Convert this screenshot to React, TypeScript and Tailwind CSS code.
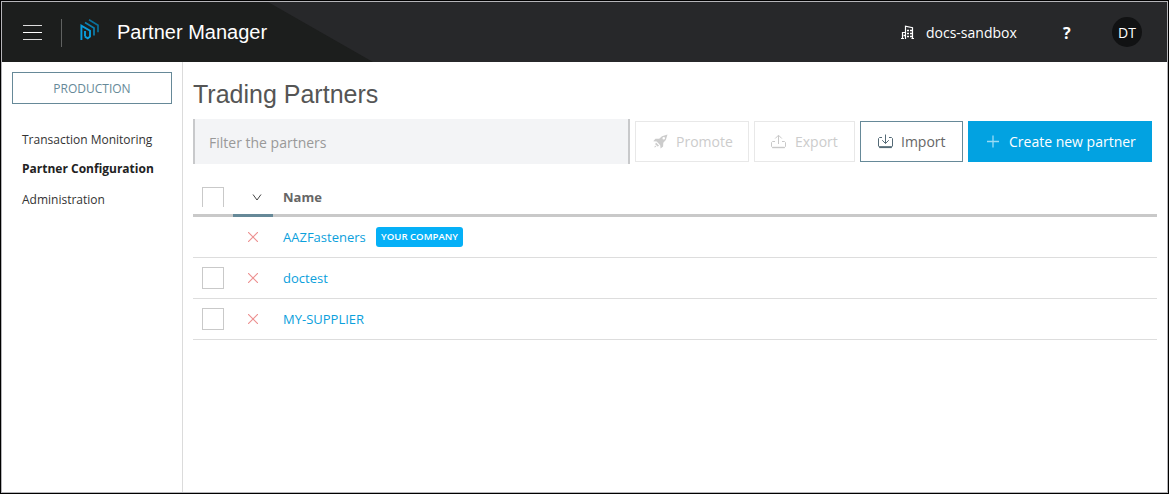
import type { ReactNode } from "react";

const partners = [
  { name: "AAZFasteners", own: true, width: "w-[83px]" },
  { name: "doctest", own: false, width: "w-[45px]" },
  { name: "MY-SUPPLIER", own: false, width: "w-[81px]" },
];

function Logo() {
  return (
    <svg width="20" height="22" viewBox="0 0 20 22" fill="none">
      <path d="M1.4 21V6.6L10 11.8V17.6L7.8 19.4L5 17.6M5 17.6V12" stroke="#0a9ddc" strokeWidth="1.9" />
      <path d="M5 3.6L14 9V16.4" stroke="#0b80b0" strokeWidth="1.7" />
      <path d="M9 0.8L18 6.2V13.2" stroke="#0a6f98" strokeWidth="1.7" />
    </svg>
  );
}

function Building() {
  return (
    <svg width="13" height="15" viewBox="0 0 13 15" fill="none" stroke="#fff">
      <path d="M4.5 14V1.2L11.5 2.7V14" strokeWidth="1.2" />
      <path d="M4.5 7.5H1.5V13.5M0 13.5H3M10.5 13.5H13" strokeWidth="1.2" />
      <path d="M6 5.5H8M9 5.5H11M6 8.5H8M9 8.5H11M6 11.5H8M9 11.5H11M2.5 10.5H4" strokeWidth="1.5" />
    </svg>
  );
}

function Tray({ up, color }: { up?: boolean; color: string }) {
  return (
    <svg width="15" height="15" viewBox="0 0 15 15" fill="none" stroke={color}>
      {up ? (
        <>
          <path d="M7.5 10V1.5M4.2 4.5L7.5 1.2L10.8 4.5" />
          <path d="M4 7.5H1.5L0.5 8.5V12.5L1.5 13.5H13.5L14.5 12.5V8.5L13.5 7.5H11" />
          <path d="M1.2 13.5H13.8" strokeWidth="1.4" />
        </>
      ) : (
        <>
          <path d="M7.5 0.5V9.5M4.2 6.2L7.5 9.5L10.8 6.2" />
          <path d="M4 3.5H1.5L0.5 4.5V12L1.5 13H13.5L14.5 12V4.5L13.5 3.5H11" />
          <path d="M1.2 13.2H13.8" strokeWidth="1.8" />
        </>
      )}
    </svg>
  );
}

function Rocket() {
  return (
    <svg width="15" height="15" viewBox="0 0 15 15" fill="#ccc">
      <path fillRule="evenodd" d="M14.5 0.5L9 2.2L6.2 4.7L2.5 4.8L0.2 7.3L3.7 7.6L7.2 11.2L7.6 14.6L10.1 12.4L10.3 8.7L12.8 6L14.5 0.5ZM10.8 2.9A1.3 1.3 0 1 1 10.7 5.5A1.3 1.3 0 0 1 10.8 2.9Z" />
      <path d="M3 8.6L6.1 11.8L4.6 12.5L2.2 10.2Z" />
      <path d="M2 11.4L3.4 12.8L1.3 13.5Z" />
    </svg>
  );
}

function Cross() {
  return (
    <svg width="10" height="10" viewBox="0 0 10 10" stroke="#ec8f8f" strokeWidth="1.1">
      <path d="M0 0L10 10M10 0L0 10" />
    </svg>
  );
}

function Button({ children, className }: { children: ReactNode; className: string }) {
  return <button className={"flex h-[41px] shrink-0 items-center whitespace-nowrap border text-left text-[14px] " + className}>{children}</button>;
}

export default function App() {
  return (
    <div className="h-[494px] w-[1169px] overflow-hidden border border-black bg-white font-['Open_Sans','Noto_Sans',sans-serif]">
      <div className="flex h-full flex-col border border-[#b5b5b9]">
        <header className="flex h-[60px] shrink-0 items-center bg-[#27282a] pr-[25px] text-white">
          <div className="flex h-[60px] w-[371px] shrink-0 items-center bg-[#1c1e1d] pl-[21px] [clip-path:polygon(0_0,266px_0,371px_100%,0_100%)]">
            <div className="flex w-[19px] flex-col gap-[6px]">
              <i className="h-px bg-[#ddd]" />
              <i className="h-px bg-white" />
              <i className="h-px bg-[#ddd]" />
            </div>
            <div className="ml-[19px] mt-[1px] h-7 w-px bg-[#606261]" />
            <div className="-mt-[5px] ml-[18px]"><Logo /></div>
            <div className="ml-[17px] w-[152px] whitespace-nowrap font-['Liberation_Sans',Arial,sans-serif] text-[20px] leading-[24px]">Partner Manager</div>
          </div>
          <div className="ml-auto flex items-center">
            <Building />
            <div className="ml-3 mt-[2px] w-[91px] whitespace-nowrap text-[14px] leading-5">docs-sandbox</div>
            <span className="ml-[46px] mt-[2px] w-[9px] text-[16px] font-bold leading-5">?</span>
            <div className="ml-[40px] flex size-[30px] items-center justify-center rounded-full bg-[#111213] text-[14px]">DT</div>
          </div>
        </header>
        <div className="flex min-h-0 flex-1">
          <aside className="w-[181px] shrink-0 border-r border-[#dbdbdb] pl-[10px] pt-[10px]">
            <div className="flex h-8 w-40 items-center justify-center border border-[#668998] pt-[2px] text-[12px] text-[#668998]">PRODUCTION</div>
            <nav className="ml-[10px] mt-[27px] text-[12px] leading-[18px] text-[#333]">
              <div>Transaction Monitoring</div>
              <div className="mt-[11px] font-bold text-[#222]">Partner Configuration</div>
              <div className="mt-[13px]">Administration</div>
            </nav>
          </aside>
          <main className="min-w-0 flex-1 pl-[10px]">
            <h1 className="mt-[17px] h-[40px] font-['Liberation_Sans',Arial,sans-serif] text-[25px] leading-[31px] text-[#555]">Trading Partners</h1>
            <div className="flex items-center">
              <div className="flex h-[45px] w-[437px] shrink-0 items-center border-x-2 border-[#c8c9cb] bg-[#f3f4f6] pl-[14px] pt-[2px] text-[14px] text-[#999]">Filter the partners</div>
              <Button className="ml-[5px] w-[114px] border-[#e8e8e8] pl-[17px] text-[#ccc]">
                <Rocket /><span className="ml-[8px]">Promote</span>
              </Button>
              <Button className="ml-[5px] w-[101px] border-[#e8e8e8] pl-[16px] text-[#ccc]">
                <Tray up color="#c8c8c8" /><span className="ml-[9px]">Export</span>
              </Button>
              <Button className="ml-[5px] w-[103px] border-[#668998] pl-[17px] text-[#666]">
                <Tray color="#546a76" /><span className="ml-[8px]">Import</span>
              </Button>
              <Button className="ml-[5px] w-[184px] border-[#02a2e1] bg-[#02a2e1] pl-[18px] text-white">
                <svg width="13" height="13" viewBox="0 0 13 13" stroke="#9adcf5" strokeWidth="1.3"><path d="M6 0.5V12.5M0 6.5H12" /></svg>
                <span className="ml-[9px]">Create new partner</span>
              </Button>
            </div>
            <div className="w-[964px] text-[13px]">
              <div className="flex h-[53px]">
                <div className="w-10 border-b-[3px] border-[#c9c9c9] pl-[9px] pt-[23px]">
                  <div className="h-5 w-[22px] border border-b-0 border-[#c9c9c9]" />
                </div>
                <div className="w-10 border-b-[3px] border-[#668998] pl-[19px] pt-[30px]">
                  <svg width="10" height="7" viewBox="0 0 10 7" fill="none" stroke="#444"><path d="M1 0.5L5 6L9 0.5" /></svg>
                </div>
                <div className="flex-1 border-b-[3px] border-[#c9c9c9] pl-[10px] pt-[23px] font-bold leading-5 text-[#666]">Name</div>
              </div>
              {partners.map((p) => (
                <div key={p.name} className="flex h-[41px] items-center border-b border-[#ddd]">
                  <div className="w-10 pl-[9px]">{!p.own && <div className="size-[22px] border border-[#c9c9c9]" />}</div>
                  <div className="w-10 pl-[15px]"><Cross /></div>
                  <span className={"ml-[10px] whitespace-nowrap pt-[2px] text-[#0ba0dc] " + p.width}>{p.name}</span>
                  {p.own && (
                    <span className="ml-[10px] flex h-5 w-[87px] items-center justify-center whitespace-nowrap rounded-[3px] bg-[#05b0f7] text-[9.6px] font-semibold text-white">YOUR COMPANY</span>
                  )}
                </div>
              ))}
            </div>
          </main>
        </div>
      </div>
    </div>
  );
}
